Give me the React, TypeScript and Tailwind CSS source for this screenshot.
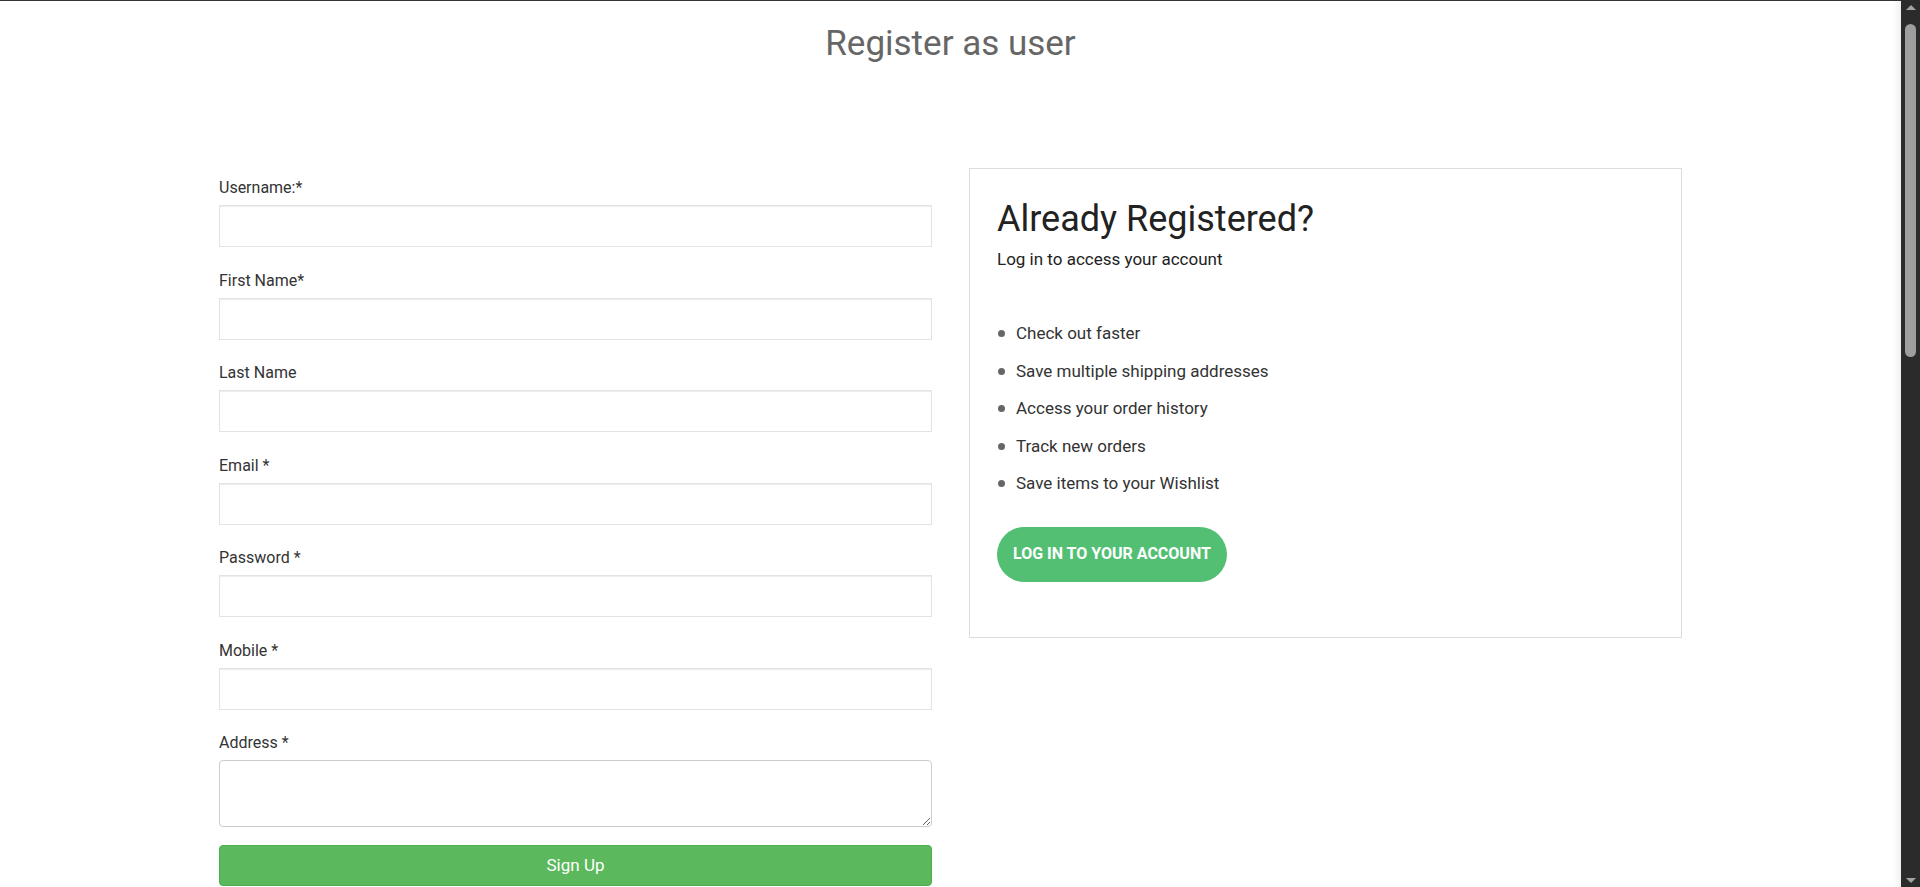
import React from 'react';

const fields = [
  { label: 'Username:*', type: 'text' },
  { label: 'First Name*', type: 'text' },
  { label: 'Last Name', type: 'text' },
  { label: 'Email *', type: 'email' },
  { label: 'Password *', type: 'password' },
  { label: 'Mobile *', type: 'text' },
];

const perks = [
  'Check out faster',
  'Save multiple shipping addresses',
  'Access your order history',
  'Track new orders',
  'Save items to your Wishlist',
];

const Scrollbar: React.FC = () => (
  <div className="w-[19px] shrink-0 bg-[#2b2b2b] flex flex-col items-center">
    <div className="h-[14px] flex items-center justify-center">
      <span className="w-0 h-0 border-x-[5px] border-x-transparent border-b-[5px] border-b-[#a3a3a3]" />
    </div>
    <div className="w-[11px] h-[333px] mt-[10px] rounded-full bg-[#9e9e9e]" />
    <div className="flex-1" />
    <div className="h-[14px] flex items-center justify-center">
      <span className="w-0 h-0 border-x-[5px] border-x-transparent border-t-[5px] border-t-[#a3a3a3]" />
    </div>
  </div>
);

export default function App() {
  return (
    <div className="h-[887px] w-full overflow-hidden flex bg-white font-['Roboto','Open_Sans',sans-serif]">
      <main className="flex-1 border-t border-[#333] bg-[linear-gradient(to_left,rgba(0,0,0,0.06),rgba(0,0,0,0)_8px)]">
        <h1 className="text-center text-[35px] leading-[40px] text-[#666] pt-[23px]">Register as user</h1>

        <div className="mx-auto w-[1463px] grid grid-cols-[713px_713px] gap-x-[37px] mt-[114px]">
          <form className="flex flex-col" onSubmit={(e) => e.preventDefault()}>
            {fields.map((f) => (
              <div key={f.label} className="mb-[23.5px]">
                <label className="block text-[16px] leading-[20px] text-[#333] mb-[7px]">{f.label}</label>
                <input
                  type={f.type}
                  className="block w-full h-[42px] border border-[#e3e3e3] bg-white shadow-[inset_0_1px_1px_rgba(0,0,0,0.075)] outline-none px-3"
                />
              </div>
            ))}
            <div className="mb-[18px]">
              <label className="block text-[16px] leading-[20px] text-[#333] mb-[7px]">Address *</label>
              <textarea className="block w-full h-[67px] border border-[#ccc] rounded-[4px] outline-none px-3 py-2" />
            </div>
            <button
              type="submit"
              className="w-full h-[41px] rounded-[4px] bg-[#5cb85c] border border-[#4cae4c] text-white text-[17px]"
            >
              Sign Up
            </button>
          </form>

          <div className="self-start border border-[#ddd] h-[470px] mt-[-10px] px-[27px] pt-[30px]">
            <h2 className="text-[36px] leading-[40px] text-[#222]">Already Registered?</h2>
            <p className="text-[17px] leading-[20px] text-[#222] mt-[10px]">Log in to access your account</p>
            <ul className="mt-[46px]">
              {perks.map((p) => (
                <li key={p} className="flex items-center h-[37.5px] text-[17px] text-[#333]">
                  <span className="w-[7px] h-[7px] rounded-full bg-[#666] ml-[1px] mr-[11px]" />
                  {p}
                </li>
              ))}
            </ul>
            <button className="mt-[24px] h-[55px] px-[16px] rounded-full bg-[#52bf73] text-white font-bold text-[16px] uppercase">
              Log in to your account
            </button>
          </div>
        </div>
      </main>
      <Scrollbar />
    </div>
  );
}
